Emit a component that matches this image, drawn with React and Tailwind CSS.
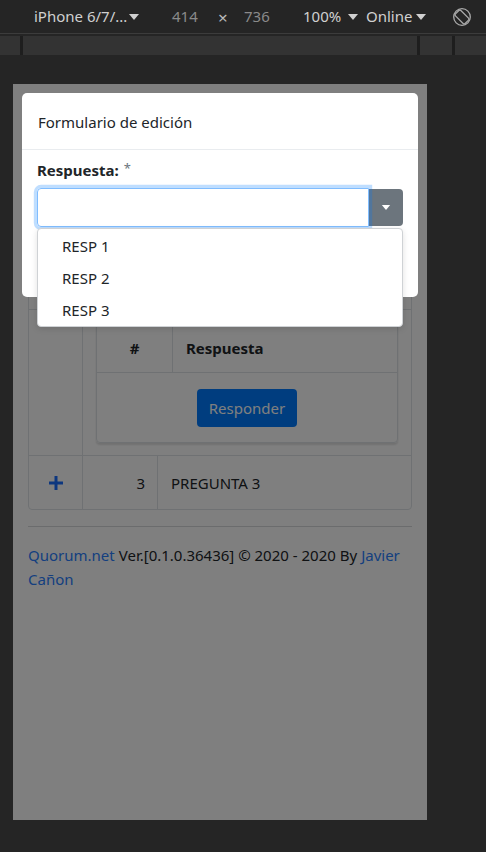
import React from 'react';

const Caret = ({ className }) => (
  <svg viewBox="0 0 10 6" className={className} fill="currentColor">
    <path d="M0 0h10L5 6z" />
  </svg>
);

const DevToolbar = () => (
  <div className="font-['Noto_Sans',sans-serif]">
    <div className="h-[34px] border-b border-[#3c3c3c] flex items-center text-[15px] text-[#d0d0d0]">
      <span className="ml-[34px] w-[93px] whitespace-nowrap">iPhone 6/7/...</span>
      <Caret className="w-[10px] h-[8px] ml-[2px] text-[#d0d0d0]" />
      <span className="ml-[33px] w-[27px] text-[#8a8a8a]">414</span>
      <span className="ml-[19px] w-[12px] text-[#b8b8b8] text-[17px] mt-[3px]">×</span>
      <span className="ml-[14px] w-[30px] text-[#8a8a8a]">736</span>
      <span className="ml-[29px] w-[40px]">100%</span>
      <Caret className="w-[10px] h-[8px] ml-[5px]" />
      <span className="ml-[8px] w-[48px]">Online</span>
      <Caret className="w-[10px] h-[8px] ml-[2px]" />
      <svg viewBox="0 0 20 20" className="w-[20px] h-[20px] ml-[26px] text-[#aaaaaa]" fill="none" stroke="currentColor" strokeWidth="1.3">
        <circle cx="10" cy="10" r="8.3" />
        <rect x="6.2" y="3.2" width="7.6" height="13.6" rx="1.4" transform="rotate(-45 10 10)" />
      </svg>
    </div>
    <div className="mt-[2px] h-[19px] flex bg-[#1e1e1e] gap-[3px]">
      <div className="w-[20px] bg-[#333333]" />
      <div className="w-[394px] bg-[#333333]" />
      <div className="w-[32px] bg-[#333333]" />
      <div className="flex-1 bg-[#333333]" />
    </div>
  </div>
);

const Page = () => (
  <div className="px-[15px] text-[15px] text-[#212529] leading-6">
    <div className="h-[70px]" />
    <div className="border border-[#dee2e6] rounded-[4px]">
      <div className="grid grid-cols-[54px_75px_1fr] h-[49px] border-b border-[#dee2e6]">
        <div className="border-r border-[#dee2e6]" />
        <div className="border-r border-[#dee2e6]" />
        <div />
      </div>
      {[1, 2].map((n) => (
        <div key={n} className="grid grid-cols-[54px_75px_1fr] h-[53px] border-b border-[#dee2e6]">
          <div className="border-r border-[#dee2e6]" />
          <div className="border-r border-[#dee2e6]" />
          <div />
        </div>
      ))}
      <div className="grid grid-cols-[54px_1fr] border-b border-[#dee2e6]">
        <div className="border-r border-[#dee2e6]" />
        <div className="pt-[13px] pb-[12px] px-[13px]">
          <div className="border border-[#dee2e6] rounded-[4px] shadow-[0_2px_2px_rgba(0,0,0,0.12)]">
            <div className="grid grid-cols-[76px_1fr] h-[49px] font-bold border-b border-[#dee2e6]">
              <div className="border-r border-[#dee2e6] flex items-center justify-center">#</div>
              <div className="flex items-center pl-[13px]">Respuesta</div>
            </div>
            <div className="h-[69px] flex items-center justify-center">
              <button className="h-[38px] px-[12px] rounded-[4px] bg-[#007bff] text-white">Responder</button>
            </div>
          </div>
        </div>
      </div>
      <div className="grid grid-cols-[54px_75px_1fr] h-[53px]">
        <div className="border-r border-[#dee2e6] flex items-center justify-center">
          <svg viewBox="0 0 14 14" className="w-[14px] h-[14px] text-[#1a6fff]" fill="currentColor">
            <path d="M5.5 0h3v5.5H14v3H8.5V14h-3V8.5H0v-3h5.5z" />
          </svg>
        </div>
        <div className="border-r border-[#dee2e6] flex items-center justify-end pr-3">3</div>
        <div className="flex items-center pl-[13px]">PREGUNTA 3</div>
      </div>
    </div>
    <hr className="mt-[16px] border-0 border-t border-[#d6d8db]" />
    <div className="mt-[16px]">
      <div className="flex">
        <span className="text-[#2a7fff]">Quorum.net</span>
        <span className="ml-[4px]">Ver.[0.1.0.36436] © 2020 - 2020 By</span>
        <span className="ml-[4px] text-[#2a7fff]">Javier</span>
      </div>
      <div className="text-[#2a7fff]">Cañon</div>
    </div>
  </div>
);

const Modal = () => (
  <div className="absolute left-[9px] top-[9px] w-[396px] h-[204px] bg-white rounded-[5px] text-[#212529] text-[15px] leading-6">
    <div className="h-[57px] px-[16px] flex items-center border-b border-[#e9ecef]">
      <span className="mt-[1px]">Formulario de edición</span>
    </div>
    <div className="px-[15px] pt-[8px]">
      <div className="h-[24px] mb-[6px] flex items-start">
        <span className="font-bold text-[15px]">Respuesta:</span>
        <span className="ml-[5px] text-[#6c757d] text-[13px] leading-5">*</span>
      </div>
      <div className="flex h-[39px]">
        <div className="w-[332px] h-[39px] border border-[#80bdff] rounded-l-[4px] shadow-[0_0_0_0.2rem_rgba(0,123,255,0.25)] relative z-10" />
        <div className="w-[34px] h-[37px] mt-[1px] bg-[#6c757d] rounded-r-[4px] flex items-center justify-center">
          <Caret className="w-[10px] h-[5px] text-white" />
        </div>
      </div>
    </div>
    <div className="absolute left-[15px] top-[135px] w-[366px] bg-white border border-[#cfd2d5] rounded-[4px] shadow-[0_2px_6px_rgba(0,0,0,0.12)] z-20 pt-[1px]">
      {['RESP 1', 'RESP 2', 'RESP 3'].map((r) => (
        <div key={r} className="h-[32px] pl-[24px] flex items-center">{r}</div>
      ))}
    </div>
  </div>
);

export default function App() {
  return (
    <div className="w-[486px] h-[852px] bg-[#252525] overflow-hidden font-['Noto_Sans',sans-serif]">
      <DevToolbar />
      <div className="mt-[29px] ml-[13px] w-[414px] h-[736px] bg-white relative overflow-hidden">
        <Page />
        <div className="absolute inset-0 bg-black/50" />
        <Modal />
      </div>
    </div>
  );
}
